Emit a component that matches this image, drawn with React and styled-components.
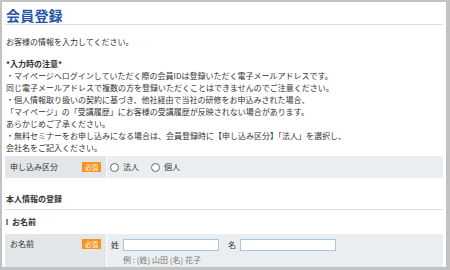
import React from "react";
import styled, { createGlobalStyle } from "styled-components";

const Global = createGlobalStyle`
  html, body { margin: 0; padding: 0; background: #fff; }
  body { font-family: "Noto Sans CJK JP", "Noto Sans", sans-serif; color: #333; }
`;

const Frame = styled.div`
  box-sizing: border-box;
  width: 450px;
  height: 270px;
  overflow: hidden;
  border-style: solid;
  border-color: #c2c2c2;
  border-width: 2px 4px 3px 2px;
  padding: 5px 3px 0 3px;
  background: #fff;
  font-size: 8px;
  line-height: 12px;
`;

const Title = styled.h1`
  margin: 0;
  padding: 0 0 0 1px;
  font-size: 14px;
  line-height: 17px;
  font-weight: bold;
  color: #2456a4;
  border-bottom: 1px solid #dce1e5;
  letter-spacing: 0.2px;
`;

const Para = styled.p`
  margin: ${(p) => p.$mt || 0}px 0 0 0;
  padding-left: 1px;
  white-space: nowrap;
`;

const Bold = styled.span`
  font-weight: bold;
`;

const Row = styled.div`
  display: grid;
  grid-template-columns: 101px 1fr;
  column-gap: 1px;
  background: #fff;
  margin-top: ${(p) => p.$mt || 0}px;
  min-height: ${(p) => p.$h || 22}px;
`;

const LabelCell = styled.div`
  background: #e2e6e8;
  display: flex;
  align-items: ${(p) => (p.$top ? "flex-start" : "center")};
  justify-content: space-between;
  padding: ${(p) => (p.$top ? "4px 5px 0 5px" : "0 5px")};
`;

const Badge = styled.span`
  display: inline-block;
  background: #f7931e;
  color: #fff;
  font-size: 6.5px;
  line-height: 10px;
  height: 10px;
  padding: 0 3px;
  margin-top: ${(p) => (p.$top ? "1px" : "0")};
`;

const ValueCell = styled.div`
  background: #ebeef0;
  display: flex;
  flex-direction: ${(p) => (p.$col ? "column" : "row")};
  align-items: ${(p) => (p.$col ? "flex-start" : "center")};
  padding: ${(p) => (p.$col ? "5px 0 0 4px" : "0 0 0 3px")};
`;

const RadioLabel = styled.label`
  display: inline-flex;
  align-items: center;
  gap: 4px;
  margin-right: 12px;
`;

const RadioCircle = styled.span`
  box-sizing: border-box;
  width: 9px;
  height: 9px;
  border: 1px solid #666;
  border-radius: 50%;
  background: #fff;
`;

const Section = styled.h2`
  margin: ${(p) => p.$mt}px 0 0 0;
  padding: 0 0 4px 1px;
  font-size: 8px;
  line-height: 12px;
  font-weight: bold;
  border-bottom: 1px solid #dcdfe1;
`;

const SubHead = styled.h3`
  margin: 6px 0 0 0;
  font-size: 8px;
  line-height: 12px;
  font-weight: bold;
  display: flex;
  align-items: center;
  gap: 4px;
  padding-left: 1px;
  &::before {
    content: "";
    width: 2px;
    height: 6px;
    background: #888;
  }
`;

const NameLine = styled.div`
  display: flex;
  align-items: center;
`;

const NameLabel = styled.span`
  width: 12px;
`;

const Input = styled.span`
  box-sizing: border-box;
  display: inline-block;
  width: 96px;
  height: 12px;
  border: 1px solid #a9c5e2;
  background: #fff;
  margin-right: ${(p) => p.$mr || 0}px;
`;

const Hint = styled.div`
  color: #777;
  margin: 3px 0 0 12px;
  white-space: pre;
`;

export default function App() {
  return (
    <>
      <Global />
      <Frame>
        <Title>会員登録</Title>
        <Para $mt={11}>お客様の情報を入力してください。</Para>
        <Para $mt={10}>
          <Bold>*入力時の注意*</Bold>
          <br />
          ・マイページへログインしていただく際の会員IDは登録いただく電子メールアドレスです。
          <br />
          同じ電子メールアドレスで複数の方を登録いただくことはできませんのでご注意ください。
          <br />
          ・個人情報取り扱いの契約に基づき、他社経由で当社の研修をお申込みされた場合、
          <br />
          「マイページ」の「受講履歴」にお客様の受講履歴が反映されない場合があります。
          <br />
          あらかじめご了承ください。
          <br />
          ・無料セミナーをお申し込みになる場合は、会員登録時に【申し込み区分】「法人」を選択し、
          <br />
          会社名をご記入ください。
        </Para>
        <Row $mt={2} $h={22}>
          <LabelCell>
            <span>申し込み区分</span>
            <Badge>必須</Badge>
          </LabelCell>
          <ValueCell>
            <RadioLabel>
              <RadioCircle />
              法人
            </RadioLabel>
            <RadioLabel>
              <RadioCircle />
              個人
            </RadioLabel>
          </ValueCell>
        </Row>
        <Section $mt={15}>本人情報の登録</Section>
        <SubHead>お名前</SubHead>
        <Row $mt={6} $h={40}>
          <LabelCell $top>
            <span>お名前</span>
            <Badge $top>必須</Badge>
          </LabelCell>
          <ValueCell $col>
            <NameLine>
              <NameLabel>姓</NameLabel>
              <Input $mr={9} />
              <NameLabel>名</NameLabel>
              <Input />
            </NameLine>
            <Hint>例 : (姓) 山田 (名) 花子</Hint>
          </ValueCell>
        </Row>
      </Frame>
    </>
  );
}
